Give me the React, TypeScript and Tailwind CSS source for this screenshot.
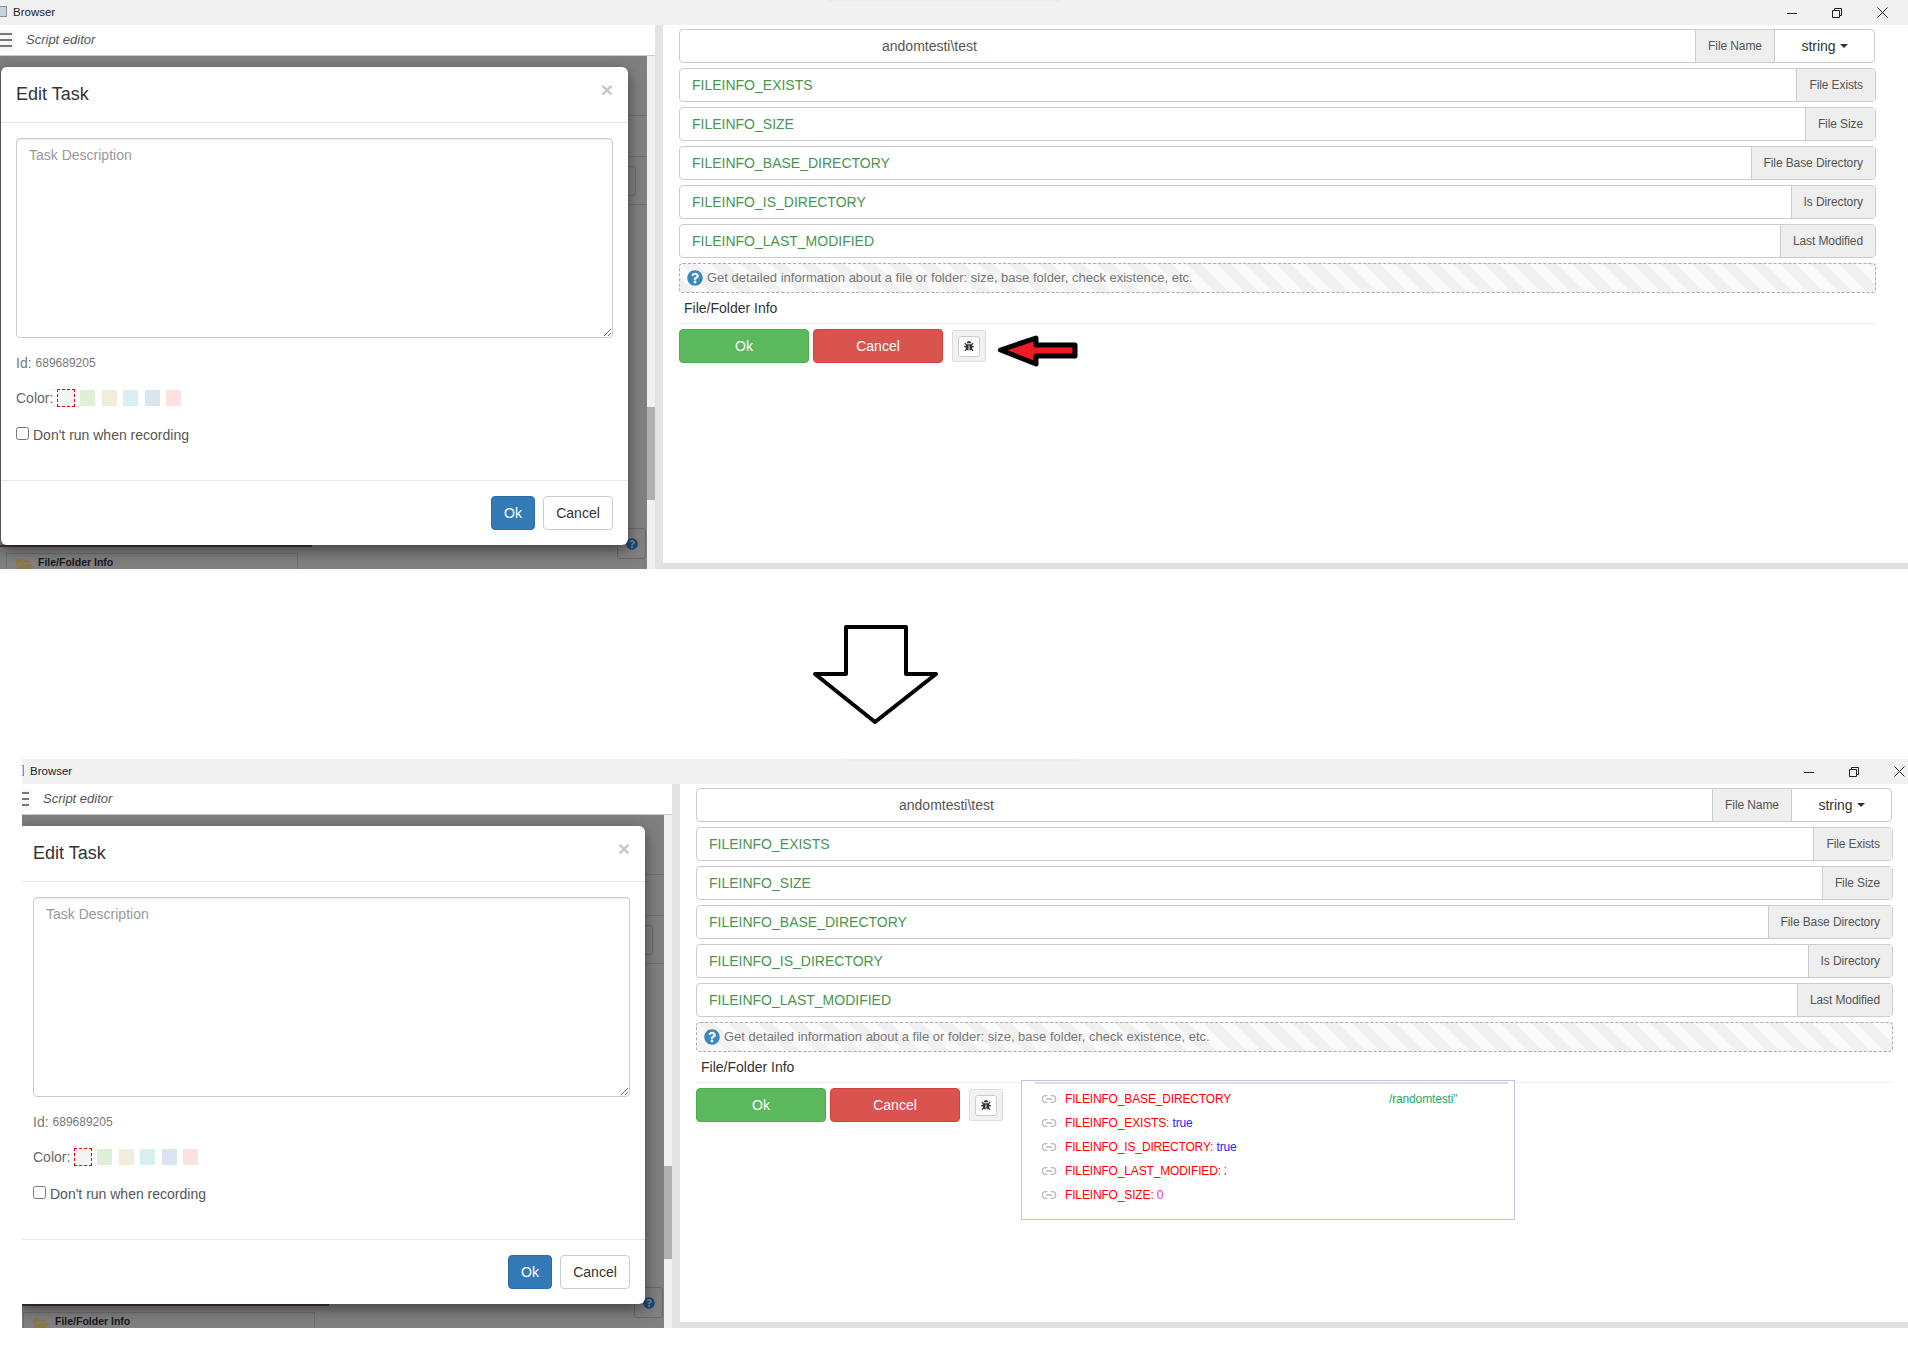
import { Link2 } from 'lucide-react';
import { FaBug, FaFolderOpen, FaQuestionCircle } from 'react-icons/fa';

const fields = [
  { name: 'FILEINFO_EXISTS', label: 'File Exists', addon: 'w-[79px]' },
  { name: 'FILEINFO_SIZE', label: 'File Size', addon: 'w-[70px]' },
  { name: 'FILEINFO_BASE_DIRECTORY', label: 'File Base Directory', addon: 'w-[124px]' },
  { name: 'FILEINFO_IS_DIRECTORY', label: 'Is Directory', addon: 'w-[84px]' },
  { name: 'FILEINFO_LAST_MODIFIED', label: 'Last Modified', addon: 'w-[95px]' },
];

const swatches = ['bg-[#dff0d8]', 'bg-[#f0eedb]', 'bg-[#d9f0f2]', 'bg-[#d9e5f0]', 'bg-[#ffe0e0]'];

const WindowControls = () => (
  <div className="flex items-center h-full pr-[20px] gap-[35px]">
    <svg width="10" height="10" viewBox="0 0 10 10" className="text-[#222]">
      <path d="M0 5.5h10" stroke="currentColor" fill="none" />
    </svg>
    <svg width="10" height="10" viewBox="0 0 10 10" className="text-[#222]">
      <path d="M.5 2.5h7v7h-7zM2.5 2.5v-2h7v7h-2" stroke="currentColor" fill="none" />
    </svg>
    <svg width="11" height="11" viewBox="0 0 11 11" className="text-[#222]">
      <path d="M.5.5l10 10M10.500.5l-10 10" stroke="currentColor" fill="none" />
    </svg>
  </div>
);

const EditTaskModal = () => (
  <div className="absolute left-0 top-[67px] w-[628px] h-[478px] flex flex-col bg-white rounded-[6px] border-l border-[#555] shadow-[0_5px_15px_rgba(0,0,0,0.5)] z-10">
    <div className="h-[56px] shrink-0 flex items-center justify-between pl-[15px] pr-[15px] border-b border-[#e5e5e5]">
      <h4 className="text-[18px] text-[#333] pb-[1px]">Edit Task</h4>
      <span className="text-[21px] font-bold text-[#c8c8c8] leading-none pb-[10px]">×</span>
    </div>
    <div className="flex-1 pt-[15px] px-[15px]">
      <textarea
        placeholder="Task Description"
        className="block w-full h-[200px] px-[12px] py-[6px] text-[14px] leading-[20px] border border-[#ccc] rounded-[4px] resize-y shadow-[inset_0_1px_1px_rgba(0,0,0,0.075)] placeholder:text-[#999]"
      />
      <div className="mt-[17px] flex items-center gap-[4px] text-[14px] text-[#777] h-[16px]">
        <span>Id:</span>
        <span className="text-[12px]">689689205</span>
      </div>
      <div className="mt-[17px] flex items-center text-[14px] text-[#666] h-[20px]">
        <span className="w-[41px]">Color:</span>
        <span className="w-[18px] h-[18px] border border-dashed border-[#e00] bg-[#f5f5f5] mr-[5px]" />
        <div className="flex gap-[6.500px]">
          {swatches.map((swatch) => (
            <span key={swatch} className={`w-[15px] h-[16px] ${swatch}`} />
          ))}
        </div>
      </div>
      <label className="mt-[17px] flex items-center gap-[4px] text-[14px] text-[#555] h-[20px]">
        <input type="checkbox" className="m-0 w-[13px] h-[13px] mb-[3px]" />
        Don't run when recording
      </label>
    </div>
    <div className="h-[65px] shrink-0 flex items-start justify-end gap-[8px] pt-[15px] pr-[15px] border-t border-[#e5e5e5]">
      <button className="w-[44px] h-[34px] rounded-[4px] bg-[#337ab7] border border-[#2e6da4] text-[14px] text-white">Ok</button>
      <button className="w-[70px] h-[34px] rounded-[4px] bg-white border border-[#ccc] text-[14px] text-[#333]">Cancel</button>
    </div>
  </div>
);

const ResultPanel = () => (
  <div className="absolute left-[1004px] top-[321px] w-[494px] h-[140px] border border-[#c3bfe6] bg-white z-10 text-[12px] tracking-[-0.15px]">
    <div className="ml-[13px] mt-[1px] w-[473px] h-[2px] bg-[#ddd]" />
    <ul className="pt-[3px] pl-[19px]">
      <li className="flex items-center h-[24px]">
        <Link2 size={16} className="text-[#bbb] mr-[8px]" />
        <span className="w-[324px] text-[#f00]">FILEINFO_BASE_DIRECTORY</span>
        <span className="text-[#22aa66]">/randomtesti"</span>
      </li>
      <li className="flex items-center h-[24px]">
        <Link2 size={16} className="text-[#bbb] mr-[8px]" />
        <span className="text-[#f00] whitespace-pre">FILEINFO_EXISTS: </span>
        <span className="text-[#22f]">true</span>
      </li>
      <li className="flex items-center h-[24px]">
        <Link2 size={16} className="text-[#bbb] mr-[8px]" />
        <span className="text-[#f00] whitespace-pre">FILEINFO_IS_DIRECTORY: </span>
        <span className="text-[#22f]">true</span>
      </li>
      <li className="flex items-center h-[24px]">
        <Link2 size={16} className="text-[#bbb] mr-[8px]" />
        <span className="text-[#f00] whitespace-pre">FILEINFO_LAST_MODIFIED: </span>
        <span className="w-[2px] overflow-hidden text-[#e33]">2</span>
      </li>
      <li className="flex items-center h-[24px]">
        <Link2 size={16} className="text-[#bbb] mr-[8px]" />
        <span className="text-[#f00] whitespace-pre">FILEINFO_SIZE: </span>
        <span className="text-[#d3d]">0</span>
      </li>
    </ul>
  </div>
);

const Shot = ({ annotated }: { annotated: boolean }) => (
  <div className="relative w-[1908px] h-[569px] flex flex-col overflow-hidden">
    <div className="relative h-[25px] shrink-0 bg-[#f1f1f1] flex items-center justify-between">
      <div className="flex items-center h-full">
        <span className="w-[7px] h-[11px] mb-[2px] bg-[#c9d3dc] border-y border-r border-[#8a949c]" />
        <span className="ml-[6px] text-[11.5px] text-[#222]">Browser</span>
      </div>
      <div className="absolute left-[829px] top-0 w-[231px] h-[2px] bg-[#ececec]" />
      <WindowControls />
    </div>

    <div className="flex flex-1 min-h-0">
      <div className="w-[655px] shrink-0 flex flex-col">
        <div className="h-[31px] shrink-0 flex items-center bg-white border-b border-[#ccc]">
          <div className="w-[15px] h-[21px] bg-[#f8f8f8] flex flex-col justify-center gap-[4px]">
            <span className="w-[12px] h-[2px] bg-[#777]" />
            <span className="w-[12px] h-[2px] bg-[#777]" />
            <span className="w-[12px] h-[2px] bg-[#777]" />
          </div>
          <span className="ml-[11px] text-[13px] italic text-[#555]">Script editor</span>
        </div>
        <div className="flex flex-1 min-h-0">
          <div className="relative w-[647px] shrink-0 flex flex-col bg-[#808080]">
            <div className="h-[60px] shrink-0 border-b border-[#707070]" />
            <div className="h-[41px] shrink-0 border-b border-[#707070]" />
            <div className="h-[48px] shrink-0 border-b border-[#707070] flex items-center justify-end pr-[11px]">
              <span className="w-[20px] h-[30px] rounded-[3px] border border-[#6a6a6a]" />
            </div>
            <div className="flex-1" />
            <div className="h-[2px] w-[312px] bg-[#503434]" />
            <div className="ml-[6px] mt-[6px] h-[16px] w-[292px] flex items-start gap-[6px] border-t border-x border-[#707070] pl-[9px] pt-[2px] text-[10.5px] leading-[12px] font-bold text-[#1a1a1a]">
              <FaFolderOpen size={16} className="text-[#8a7a4a]" />
              File/Folder Info
            </div>
            <div className="absolute left-[617px] top-[472px] w-[29px] h-[31px] border border-[#6a6a6a] rounded-[3px] flex items-center justify-center">
              <FaQuestionCircle size={12} className="text-[#1a4a7a]" />
            </div>
          </div>
          <div className="w-[8px] shrink-0 bg-[#f1f1f1] pt-[351px]">
            <div className="h-[93px] bg-[#b0b0b0]" />
          </div>
        </div>
      </div>
      <div className="w-[8px] shrink-0 bg-[#e3e3e3]" />

      <div className="relative flex-1 flex flex-col bg-white">
        <div className="flex-1 pt-[4px] pl-[16px] pr-[32px] text-[14px]">
          <div className="flex h-[34px] w-[1196px] border border-[#ccc] rounded-[4px]">
            <div className="flex-1 flex items-center pl-[202px] text-[#555]">andomtesti\test</div>
            <div className="w-[80px] flex items-center justify-center text-[12px] tracking-[-0.1px] text-[#555] bg-[#eee] border-x border-[#ccc]">File Name</div>
            <div className="w-[99px] flex items-center justify-center gap-[4px] text-[#333]">
              string
              <span className="w-0 h-0 border-x-[4px] border-x-transparent border-t-[4px] border-t-[#333]" />
            </div>
          </div>
          {fields.map((field) => (
            <div key={field.name} className="flex h-[34px] mt-[5px] w-[1197px] border border-[#ccc] rounded-[4px]">
              <div className="flex-1 flex items-center pl-[12px] text-[#47954f]">{field.name}</div>
              <div className={`${field.addon} flex items-center justify-end pr-[12px] text-[12px] tracking-[-0.1px] text-[#555] bg-[#eee] border-l border-[#ccc]`}>{field.label}</div>
            </div>
          ))}
          <div className="mt-[5px] w-[1197px] h-[30px] flex items-center gap-[4px] pl-[7px] text-[13px] text-[#777] border border-dashed border-[#aaa] rounded-[4px] bg-[repeating-linear-gradient(45deg,#f1f1f1,#f1f1f1_10.5px,#fafafa_10.5px,#fafafa_21px)]">
            <FaQuestionCircle size={16} className="text-[#3c87bd]" />
            Get detailed information about a file or folder: size, base folder, check existence, etc.
          </div>
          <div className="w-[1197px] h-[31px] flex items-center pl-[5px] text-[#333] border-b border-[#eee]">File/Folder Info</div>
          <div className="mt-[5px] flex items-start">
            <button className="w-[130px] h-[34px] rounded-[4px] bg-[#5cb85c] border border-[#4cae4c] text-white">Ok</button>
            <button className="ml-[4px] w-[130px] h-[34px] rounded-[4px] bg-[#d9534f] border border-[#d43f3a] text-white">Cancel</button>
            <div className="ml-[9px] mt-[1px] w-[34px] h-[32px] flex items-center justify-center bg-[#f1f1f1] border border-[#ddd] rounded-[2px]">
              <span className="w-[22px] h-[21px] flex items-center justify-center bg-white border border-[#ccc] rounded-[3px]">
                <FaBug size={10} className="text-[#333]" />
              </span>
            </div>
            {annotated ? null : (
              <svg width="82" height="36" viewBox="0 0 82 36" className="ml-[11px] mt-[3px]">
                <path d="M3.500 18L39 6v7h39v11H39v8z" fill="#ed1c24" stroke="#000" strokeWidth="5" strokeLinejoin="round" />
              </svg>
            )}
          </div>
        </div>
        <div className="h-[6px] shrink-0 bg-[#e0e0e0]" />
      </div>
    </div>

    <EditTaskModal />
    {annotated ? <ResultPanel /> : null}
  </div>
);

const App = () => (
  <div className="w-[1908px] h-[1358px] overflow-hidden bg-white font-['Liberation_Sans',Arial,sans-serif]">
    <Shot annotated={false} />
    <div className="h-[190px] flex justify-start">
      <svg width="130" height="104" viewBox="0 0 130 104" className="ml-[810px] mt-[55px]">
        <path d="M36 3h60v47h30L65 98 5 50h31z" fill="#fff" stroke="#000" strokeWidth="4" strokeLinejoin="round" />
      </svg>
    </div>
    <div className="ml-[22px] overflow-hidden">
      <div className="-ml-[5px]">
        <Shot annotated={true} />
      </div>
    </div>
  </div>
);

export default App;
